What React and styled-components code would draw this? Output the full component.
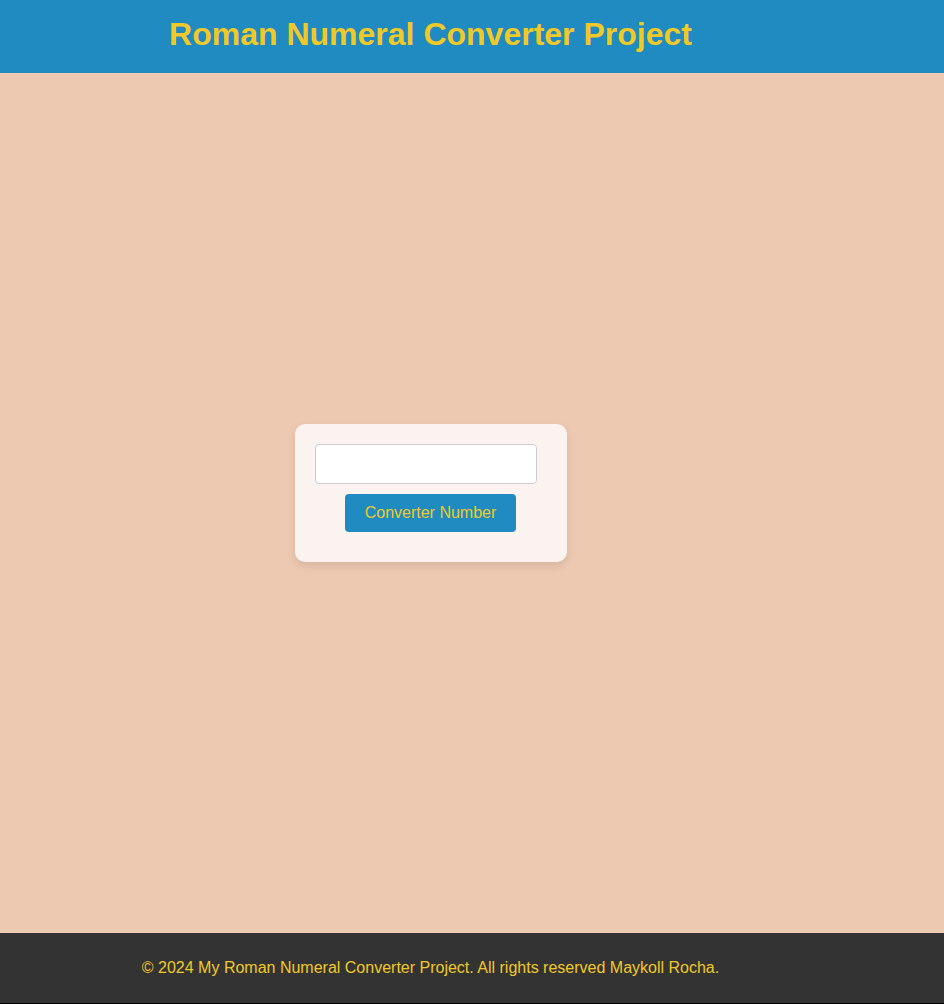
import React from 'react';
import styled, { createGlobalStyle } from 'styled-components';

const GlobalStyle = createGlobalStyle`
  html, body {
    margin: 0;
    padding: 0;
  }
  body {
    font-family: "Liberation Sans", Arial, sans-serif;
    background-color: #eec9b1;
  }
`;

const Page = styled.div`
  display: flex;
  flex-direction: column;
  min-height: 1004px;
`;

const Header = styled.header`
  background-color: #1f8bc0;
  height: 73px;
  display: flex;
  align-items: center;
  padding-bottom: 5px;
  box-sizing: border-box;
`;

const Inner = styled.div`
  width: 861px;
  text-align: center;
`;

const Title = styled.h1`
  margin: 0;
  color: #f0c929;
  font-size: 32px;
  font-weight: bold;
`;

const Main = styled.main`
  flex: 1;
  width: 861px;
  display: flex;
  align-items: center;
  justify-content: center;
  padding-bottom: 20px;
  box-sizing: border-box;
`;

const Card = styled.div`
  background-color: #fbf3ef;
  border-radius: 10px;
  padding: 20px 20px 30px;
  width: 272px;
  box-sizing: border-box;
  display: flex;
  flex-direction: column;
  align-items: center;
  box-shadow: 0 4px 8px rgba(0, 0, 0, 0.1);
`;

const NumberInput = styled.input`
  align-self: flex-start;
  width: 222px;
  height: 40px;
  box-sizing: border-box;
  border: 1px solid #ccc;
  border-radius: 4px;
  background: #fff;
  font-size: 16px;
  padding: 0 8px;
  outline: none;
`;

const ConvertButton = styled.button`
  margin-top: 10px;
  width: 171px;
  height: 38px;
  border: none;
  border-radius: 4px;
  background-color: #1f8bc0;
  color: #f0c929;
  font-family: "Liberation Sans", Arial, sans-serif;
  font-size: 16px;
  cursor: pointer;
`;

const Footer = styled.footer`
  background-color: #333;
  height: 71px;
  display: flex;
  align-items: center;
  border-bottom: 1px solid #000;
  box-sizing: border-box;
`;

const FooterText = styled.p`
  margin: 0;
  color: #f0c929;
  font-size: 16px;
`;

const App = () => {
  return (
    <>
      <GlobalStyle />
      <Page>
        <Header>
          <Inner>
            <Title>Roman Numeral Converter Project</Title>
          </Inner>
        </Header>
        <Main>
          <Card>
            <NumberInput type="number" />
            <ConvertButton>Converter Number</ConvertButton>
          </Card>
        </Main>
        <Footer>
          <Inner>
            <FooterText>© 2024 My Roman Numeral Converter Project. All rights reserved Maykoll Rocha.</FooterText>
          </Inner>
        </Footer>
      </Page>
    </>
  );
};

export default App;
